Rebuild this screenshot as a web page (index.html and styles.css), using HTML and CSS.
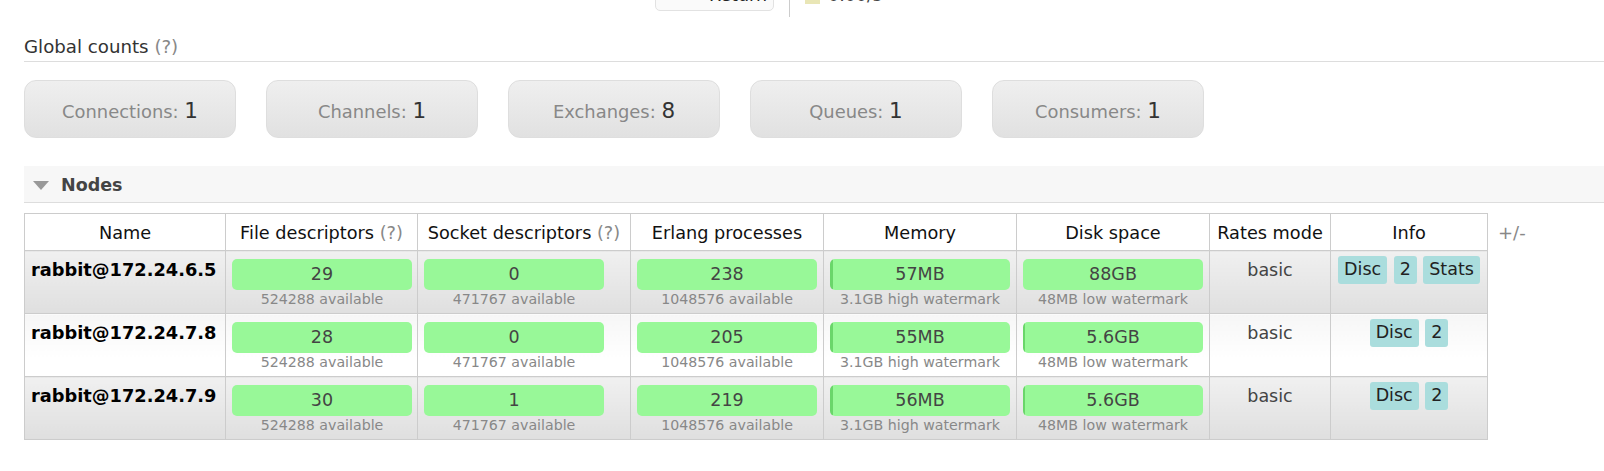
FILE: index.html
```html
<!DOCTYPE html>
<html>
<head>
<meta charset="utf-8">
<title>Overview</title>
<link rel="stylesheet" href="styles.css">
</head>
<body>
<div class="topbar">
  <div class="ret-btn">Return</div>
  <div class="vsep"></div>
  <div class="legend"><span class="swatch"></span><span class="legend-text">0.00/s</span></div>
</div>
<div class="main">
  <h2 class="title">Global counts <span class="help">(?)</span></h2>
  <div class="counts">
    <div class="count"><span>Connections: <strong>1</strong></span></div>
    <div class="count"><span>Channels: <strong>1</strong></span></div>
    <div class="count"><span>Exchanges: <strong>8</strong></span></div>
    <div class="count"><span>Queues: <strong>1</strong></span></div>
    <div class="count"><span>Consumers: <strong>1</strong></span></div>
  </div>

  <div class="section-head"><span class="tri"></span>Nodes</div>

  <div class="nodes-wrap">
    <table class="list">
      <colgroup>
        <col class="c-name"><col class="c-fd"><col class="c-sd"><col class="c-erl"><col class="c-mem"><col class="c-disk"><col class="c-rates"><col class="c-info">
      </colgroup>
      <thead>
        <tr>
          <th>Name</th>
          <th>File descriptors <span class="help">(?)</span></th>
          <th>Socket descriptors <span class="help">(?)</span></th>
          <th>Erlang processes</th>
          <th>Memory</th>
          <th>Disk space</th>
          <th>Rates mode</th>
          <th>Info</th>
        </tr>
      </thead>
      <tbody>
        <tr class="alt1">
          <td class="name">rabbit@172.24.6.5</td>
          <td><div class="bar-wrap"><div class="bar">29</div><div class="sub">524288 available</div></div></td>
          <td><div class="bar-wrap"><div class="bar">0</div><div class="sub">471767 available</div></div></td>
          <td><div class="bar-wrap"><div class="bar">238</div><div class="sub">1048576 available</div></div></td>
          <td><div class="bar-wrap"><div class="bar used" style="--used: 3px">57MB</div><div class="sub">3.1GB high watermark</div></div></td>
          <td><div class="bar-wrap"><div class="bar">88GB</div><div class="sub">48MB low watermark</div></div></td>
          <td class="rates">basic</td>
          <td class="info"><div class="badges"><span class="badge">Disc</span><span class="badge">2</span><span class="badge">Stats</span></div></td>
        </tr>
        <tr class="alt2">
          <td class="name">rabbit@172.24.7.8</td>
          <td><div class="bar-wrap"><div class="bar">28</div><div class="sub">524288 available</div></div></td>
          <td><div class="bar-wrap"><div class="bar">0</div><div class="sub">471767 available</div></div></td>
          <td><div class="bar-wrap"><div class="bar">205</div><div class="sub">1048576 available</div></div></td>
          <td><div class="bar-wrap"><div class="bar used" style="--used: 3px">55MB</div><div class="sub">3.1GB high watermark</div></div></td>
          <td><div class="bar-wrap"><div class="bar used" style="--used: 2px">5.6GB</div><div class="sub">48MB low watermark</div></div></td>
          <td class="rates">basic</td>
          <td class="info"><div class="badges"><span class="badge">Disc</span><span class="badge">2</span></div></td>
        </tr>
        <tr class="alt1">
          <td class="name">rabbit@172.24.7.9</td>
          <td><div class="bar-wrap"><div class="bar">30</div><div class="sub">524288 available</div></div></td>
          <td><div class="bar-wrap"><div class="bar">1</div><div class="sub">471767 available</div></div></td>
          <td><div class="bar-wrap"><div class="bar">219</div><div class="sub">1048576 available</div></div></td>
          <td><div class="bar-wrap"><div class="bar used" style="--used: 3px">56MB</div><div class="sub">3.1GB high watermark</div></div></td>
          <td><div class="bar-wrap"><div class="bar used" style="--used: 2px">5.6GB</div><div class="sub">48MB low watermark</div></div></td>
          <td class="rates">basic</td>
          <td class="info"><div class="badges"><span class="badge">Disc</span><span class="badge">2</span></div></td>
        </tr>
      </tbody>
    </table>
    <span class="plusminus">+/-</span>
  </div>
</div>
</body>
</html>
```

FILE: styles.css
```css
* { box-sizing: border-box; }

html, body {
  margin: 0;
  padding: 0;
  background: #fff;
}

body {
  font-family: "DejaVu Sans", Verdana, sans-serif;
  font-size: 17.5px;
  color: #484848;
  overflow: hidden;
}

/* cropped top toolbar */
.topbar {
  display: flex;
  align-items: flex-start;
  height: 17px;
  margin-left: 655px;
}

.ret-btn {
  margin-top: -19px;
  width: 119px;
  height: 30px;
  border: 1px solid #e2e2e2;
  border-radius: 5px;
  background: #fafafa;
  padding: 3px 6px 0 0;
  text-align: right;
  line-height: 20px;
  color: #222;
}

.vsep {
  width: 1px;
  height: 17px;
  background: #ccc;
  margin-left: 15px;
}

.legend {
  display: flex;
  align-items: flex-start;
  gap: 8px;
  margin-left: 15px;
  margin-top: -15px;
  line-height: 20px;
  color: #444;
}

.swatch {
  width: 15px;
  height: 19px;
  background: #e9e6b6;
}

/* main area */
.main {
  padding-left: 24px;
}

.title {
  margin: 19px 0 0;
  padding-bottom: 3px;
  font-size: 18.2px;
  font-weight: normal;
  line-height: 22px;
  color: #333;
  border-bottom: 1px solid #ddd;
}

.help {
  color: #888;
}

.counts {
  display: flex;
  gap: 30px;
  margin-top: 18px;
}

.count {
  width: 212px;
  height: 58px;
  border: 1px solid #dedede;
  border-radius: 12px;
  background: linear-gradient(#efefef, #e1e1e1);
  display: flex;
  align-items: center;
  justify-content: center;
  color: #888;
  font-size: 17.9px;
  padding-top: 2px;
}

.count strong {
  font-weight: normal;
  font-size: 21.5px;
  color: #333;
}

.section-head {
  margin-top: 28px;
  height: 37px;
  background: #f7f7f7;
  border-bottom: 1px solid #ddd;
  display: flex;
  align-items: center;
  padding-left: 9px;
  padding-top: 2px;
  font-weight: bold;
  font-size: 17.5px;
  color: #444;
}

.tri {
  width: 0;
  height: 0;
  border-left: 8px solid transparent;
  border-right: 8px solid transparent;
  border-top: 9px solid #999;
  margin-right: 12px;
  margin-top: 1px;
}

.nodes-wrap {
  display: flex;
  align-items: flex-start;
  margin-top: 10px;
}

table.list {
  border-collapse: collapse;
  table-layout: fixed;
  width: 1463px;
  border: 1px solid #ccc;
}

.c-name { width: 201px; }
.c-fd { width: 192px; }
.c-sd { width: 213px; }
.c-erl { width: 193px; }
.c-mem { width: 193px; }
.c-disk { width: 193px; }
.c-rates { width: 121px; }
.c-info { width: 157px; }

table.list th {
  font-weight: normal;
  font-size: 17.7px;
  line-height: 22px;
  color: #111;
  padding: 8px 6px 6px;
  border: 1px solid #ccc;
  background: #fff;
  white-space: nowrap;
  text-align: center;
}

table.list td {
  border: 1px solid #ccc;
  padding: 8px 6px 5px;
  vertical-align: top;
  line-height: 22px;
}

tr.alt1 td {
  background: linear-gradient(#f0f0f0, #dfdfdf);
}

tr.alt2 td {
  background: linear-gradient(#f6f6f6, #ffffff 70%);
}

td.name {
  font-weight: bold;
  font-size: 17.8px;
  line-height: 24px;
  color: #000;
  white-space: nowrap;
}

.bar-wrap {
  width: 180px;
}

.bar {
  height: 31px;
  line-height: 31px;
  border-radius: 5px;
  background: #98f898;
  text-align: center;
  color: #444;
}

.bar.used {
  background: linear-gradient(to right, #6ad66a var(--used), #98f898 var(--used));
}

.sub {
  font-size: 14.2px;
  line-height: 18px;
  color: #888;
  text-align: center;
}

td.rates {
  text-align: center;
  color: #444;
}

table.list td.info {
  padding-top: 5px;
}

.badges {
  display: flex;
  justify-content: center;
  gap: 6.5px;
}

.badge {
  height: 27.5px;
  line-height: 27.5px;
  padding: 0 6px;
  background: #aadddd;
  border-radius: 3px;
  color: #222;
}

.plusminus {
  margin-left: 10px;
  padding-top: 9px;
  font-size: 18px;
  line-height: 22px;
  color: #888;
}
```
